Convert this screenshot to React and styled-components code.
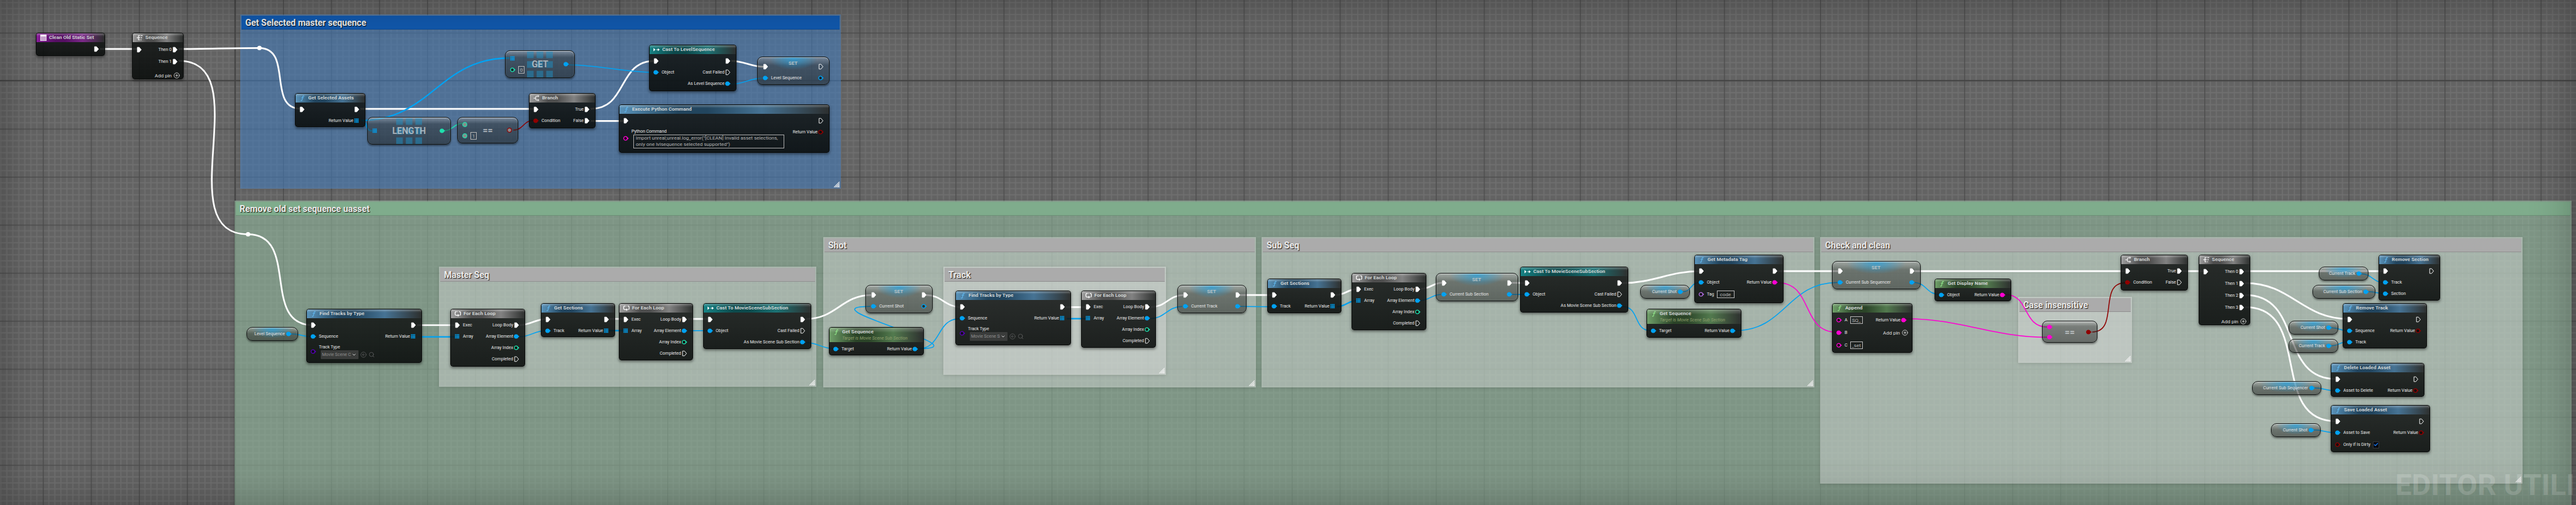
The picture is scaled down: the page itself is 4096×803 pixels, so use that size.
import React, { useId } from 'react';
import styled, { createGlobalStyle, css } from 'styled-components';
import { ChevronDown, CircleArrowLeft, Search, CirclePlus, Check } from 'lucide-react';

// graph units -> screen pixels
const ZOOM = 0.8843;
const px = (n) => `${Math.round(n * ZOOM)}px`;

const PinColor = {
  exec: '#ffffff',
  object: '#00a2f2',
  int: '#1fe0ae',
  bool: '#900000',
  string: '#ff00d2',
  class: '#5800b8',
  name: '#b06ee0',
};

const HeaderColor = {
  func: ['#5a93ba', '#22455e', '#467394'],
  pure: ['#6f9f69', '#2b4428', '#527a4e'],
  cast: ['#178385', '#0d4a4c', '#1c7274'],
  flow: ['#a0a0a0', '#4e4e4e', '#828282'],
  event: ['#8b1d9c', '#571064', '#7c2a8a'],
};

const comments = [
  { id: 'selected', title: 'Get Selected master sequence', x: 432, y: 26, w: 1080, h: 313, tone: 'blue' },
  { id: 'remove', title: 'Remove old set sequence uasset', x: 422, y: 361, w: 4202, h: 600, tone: 'green' },
  { id: 'master', title: 'Master Seq', x: 789, y: 480, w: 679, h: 216 },
  { id: 'shot', title: 'Shot', x: 1480, y: 426, w: 778, h: 270 },
  { id: 'track', title: 'Track', x: 1696, y: 480, w: 400, h: 194 },
  { id: 'sub', title: 'Sub Seq', x: 2268, y: 426, w: 994, h: 270 },
  { id: 'check', title: 'Check and clean', x: 3273, y: 426, w: 1263, h: 443 },
  { id: 'case', title: 'Case insensitive', x: 3629, y: 534, w: 205, h: 119 },
];

const exec = (label, on = true) => ({ type: 'exec', label, on });
const obj = (label, on = true) => ({ type: 'object', label, on });
const arr = (label) => ({ type: 'object', label, array: true });
const bool = (label, on = false) => ({ type: 'bool', label, on });

const loopPins = {
  left: [exec('Exec'), arr('Array')],
  right: [exec('Loop Body'), obj('Array Element'), { type: 'int', label: 'Array Index' }, exec('Completed', false)],
};
const sectionPins = { left: [exec(), obj('Track')], right: [exec(), arr('Return Value')] };
const subSectionPins = {
  left: [exec(), obj('Object')],
  right: [exec(), exec('Cast Failed', false), obj('As Movie Scene Sub Section')],
};
const sequencePins = { left: [obj('Target')], right: [obj('Return Value')] };
const targetNote = 'Target is Movie Scene Sub Section';

const nodes = [
  { title: 'Clean Old Static Set', kind: 'event', x: 65, y: 59, w: 124, h: 42, left: [], right: [exec()] },
  { title: 'Sequence', kind: 'flow', icon: 'sequence', x: 238, y: 59, w: 93, h: 84, row: 19, left: [exec()], right: [exec('Then 0'), exec('Then 1')], add: true, gap: true },
  { title: 'Get Selected Assets', kind: 'func', x: 530, y: 167, w: 127, h: 61, left: [exec()], right: [exec(), arr('Return Value')] },
  { title: 'Branch', kind: 'flow', icon: 'branch', x: 951, y: 167, w: 120, h: 63, left: [exec(), bool('Condition', true)], right: [exec('True'), exec('False')] },
  { title: 'Cast To LevelSequence', kind: 'cast', x: 1167, y: 80, w: 157, h: 84, left: [exec(), obj('Object')], right: [exec(), exec('Cast Failed', false), obj('As Level Sequence')] },
  {
    title: 'Execute Python Command', kind: 'func', x: 1113, y: 188, w: 379, h: 87,
    left: [exec(), { type: 'string', label: 'Python Command', area: 'import unreal;unreal.log_error("[CLEAN] Invalid asset selections,\nonly one lvlsequence selected supported")' }],
    right: [exec('', false), bool('Return Value')],
  },
  {
    title: 'Find Tracks by Type', kind: 'func', x: 551, y: 555, w: 208, h: 97,
    left: [exec(), obj('Sequence'), { type: 'class', label: 'Track Type', select: 'Movie Scene Cin' }],
    right: [exec(), arr('Return Value')],
  },
  { title: 'For Each Loop', kind: 'flow', icon: 'loop', x: 810, y: 555, w: 135, h: 104, ...loopPins },
  { title: 'Get Sections', kind: 'func', x: 972, y: 545, w: 133, h: 61, ...sectionPins },
  { title: 'For Each Loop', kind: 'flow', icon: 'loop', x: 1113, y: 545, w: 134, h: 103, ...loopPins },
  { title: 'Cast To MovieSceneSubSection', kind: 'cast', x: 1264, y: 545, w: 195, h: 83, ...subSectionPins },
  { title: 'Get Sequence', note: targetNote, kind: 'pure', x: 1491, y: 588, w: 171, h: 51, ...sequencePins },
  {
    title: 'Find Tracks by Type', kind: 'func', x: 1718, y: 523, w: 208, h: 98,
    left: [exec(), obj('Sequence'), { type: 'class', label: 'Track Type', select: 'Movie Scene Sub' }],
    right: [exec(), arr('Return Value')],
  },
  { title: 'For Each Loop', kind: 'flow', icon: 'loop', x: 1944, y: 523, w: 135, h: 103, ...loopPins },
  { title: 'Get Sections', kind: 'func', x: 2279, y: 501, w: 133, h: 62, ...sectionPins },
  { title: 'For Each Loop', kind: 'flow', icon: 'loop', x: 2430, y: 491, w: 135, h: 103, ...loopPins },
  { title: 'Cast To MovieSceneSubSection', kind: 'cast', x: 2733, y: 480, w: 195, h: 83, ...subSectionPins },
  {
    title: 'Get Metadata Tag', kind: 'func', x: 3046, y: 458, w: 161, h: 87,
    left: [exec(), obj('Object'), { type: 'name', label: 'Tag', text: 'code', wide: 28 }],
    right: [exec(), { type: 'string', label: 'Return Value', on: true }],
  },
  { title: 'Get Sequence', note: targetNote, kind: 'pure', x: 2960, y: 555, w: 171, h: 52, ...sequencePins },
  {
    title: 'Append', kind: 'pure', x: 3294, y: 545, w: 145, h: 89, row: 20, add: true,
    left: [
      { type: 'string', label: 'A', text: 'SQ_', wide: 20 },
      { type: 'string', label: 'B', on: true },
      { type: 'string', label: 'C', text: '_set', wide: 20 },
    ],
    right: [{ type: 'string', label: 'Return Value', on: true }],
  },
  { title: 'Get Display Name', kind: 'pure', x: 3478, y: 501, w: 138, h: 41, left: [obj('Object')], right: [{ type: 'string', label: 'Return Value', on: true }] },
  { title: 'Branch', kind: 'flow', icon: 'branch', x: 3813, y: 458, w: 121, h: 64, left: [exec(), bool('Condition', true)], right: [exec('True'), exec('False', false)] },
  { title: 'Sequence', kind: 'flow', icon: 'sequence', x: 3953, y: 458, w: 93, h: 127, row: 19, left: [exec()], right: [exec('Then 0'), exec('Then 1'), exec('Then 2'), exec('Then 3')], add: true, gap: true },
  { title: 'Remove Section', kind: 'func', x: 4277, y: 458, w: 111, h: 82, left: [exec(), obj('Track'), obj('Section')], right: [exec('', false)] },
  { title: 'Remove Track', kind: 'func', x: 4212, y: 545, w: 152, h: 81, left: [exec(), obj('Sequence'), obj('Track')], right: [exec('', false), bool('Return Value')] },
  { title: 'Delete Loaded Asset', kind: 'func', x: 4191, y: 653, w: 169, h: 61, left: [exec(), obj('Asset to Delete')], right: [exec('', false), bool('Return Value')] },
  {
    title: 'Save Loaded Asset', kind: 'func', x: 4191, y: 728, w: 179, h: 85,
    left: [exec(), obj('Asset to Save'), { type: 'bool', label: 'Only if Is Dirty', check: true }],
    right: [exec('', false), bool('Return Value')],
  },
];

const setters = [
  { label: 'Level Sequence', x: 1361, y: 102, w: 130, end: true },
  { label: 'Current Shot', x: 1556, y: 512, w: 121, used: false },
  { label: 'Current Track', x: 2117, y: 512, w: 124, used: true },
  { label: 'Current Sub Section', x: 2582, y: 491, w: 148, used: true },
  { label: 'Current Sub Sequencer', x: 3294, y: 469, w: 160, used: true },
];

const variables = [
  { label: 'Level Sequence', x: 443, y: 588, w: 93 },
  { label: 'Current Shot', x: 2949, y: 512, w: 89 },
  { label: 'Current Track', x: 4169, y: 480, w: 89 },
  { label: 'Current Sub Section', x: 4158, y: 512, w: 113 },
  { label: 'Current Shot', x: 4115, y: 577, w: 89 },
  { label: 'Current Track', x: 4115, y: 609, w: 89 },
  { label: 'Current Sub Sequencer', x: 4050, y: 685, w: 124 },
  { label: 'Current Shot', x: 4083, y: 761, w: 89 },
];

const wires = {
  exec: [
    [180, 88, 249, 88], [321, 88, 466, 86.3], [466, 86.3, 541, 195.7], [321, 109.3, 446, 421.3],
    [446, 421.3, 562, 584.6], [648, 195.7, 961, 195.7], [1062, 195.7, 1177, 109.5], [1062, 217.5, 1123, 217.5],
    [1315, 109.5, 1373, 120], [750, 584.6, 820, 584.6], [934, 584.6, 983, 573.4], [1095, 573.4, 1123, 573.4],
    [1237, 573.4, 1275, 573.4], [1450, 573.4, 1567, 530.5], [1665, 530.5, 1728, 552.3], [1916, 552.3, 1954, 552.3],
    [2069, 552.3, 2129, 530.5], [2230, 530.5, 2290, 530.5], [2402, 530.5, 2441, 519.5], [2555, 519.5, 2593, 508.5],
    [2719, 508.5, 2743, 509], [2918, 509, 3057, 487.5], [3197, 487.5, 3306, 487.5], [3443, 487.5, 3823, 487.5],
    [3924, 487.5, 3964, 487.5], [4037, 487.5, 4288, 487.5], [4037, 509, 4223, 573.5], [4037, 530.5, 4201, 681.5],
    [4037, 552.3, 4201, 757.5],
  ],
  object: [
    [524, 600.5, 561, 605.6], [1023, 116.7, 1175, 130], [1314, 151.5, 1371, 140.5], [934, 605.6, 981, 594.5],
    [1237, 594.5, 1273, 594.5], [1450, 616, 1499, 627], [1651, 627, 1565, 551], [1651, 627, 1726, 573],
    [2068, 573, 2126, 551], [2229, 551, 2288, 551.5], [2553, 540.5, 2591, 529.5], [2718, 529.5, 2741, 529.5],
    [2917, 551, 2968, 594.5], [3026, 524.5, 3055, 508.3], [3120, 594.5, 3304, 508], [3441, 508, 3487, 529.5],
    [4246, 492.5, 4286, 508], [4258, 524.5, 4286, 527.5], [4192, 589.5, 4221, 594.5], [4192, 621.8, 4221, 614.5],
    [4161, 697.5, 4199, 702.5], [4159, 773, 4199, 778],
  ],
  array: [
    [649, 216.5, 916, 104.3], [649, 216.5, 669, 235.5], [750, 605.6, 820, 605.6], [1095, 594.5, 1122, 594.5],
    [1918, 573, 1954, 573], [2404, 551.5, 2440, 540.5],
  ],
  int: [[799, 235, 831, 222]],
  bool: [[923, 234, 959, 216.5], [3762, 597, 3821, 508.5]],
  string: [[3196, 508.3, 3303, 597.5], [3605, 529.5, 3681, 588], [3427, 573, 3681, 606.5]],
};

const wireWidth = { exec: 3, array: 2.6 };

const wirePath = ([x1, y1, x2, y2]) => {
  const dx = Math.abs(x2 - x1);
  const dy = Math.abs(y2 - y1);
  // wires that run backwards leave the pin with a stronger tangent
  const t = x2 < x1 ? dx + dy / 2 : (dx + dy) / 3;
  return `M${x1} ${y1}C${x1 + t} ${y1} ${x2 - t} ${y2} ${x2} ${y2}`;
};

const GridLines = () => {
  const major = 86.37;
  const steps = [1, 2, 3, 4, 5, 6, 7];
  return (
    <Layer aria-hidden="true">
      <defs>
        <pattern
          id="grid"
          width={major}
          height={major}
          patternUnits="userSpaceOnUse"
          patternTransform={`scale(${ZOOM}) translate(422.5 145)`}
        >
          <rect width={major} height={major} fill="#636363" />
          {steps.map((n) => (
            <path
              key={n}
              d={`M${(n * major) / 8} 0V${major}M0 ${(n * major) / 8}H${major}`}
              stroke="#6f6f6f"
              strokeWidth="2"
            />
          ))}
          <path d={`M0 0V${major}M0 0H${major}`} stroke="#4b4b4b" strokeWidth="3" />
        </pattern>
      </defs>
      <rect width="100%" height="100%" fill="url(#grid)" />
      <path
        d="M422.5 0V2000M0 145H8000"
        transform={`scale(${ZOOM})`}
        stroke="#434343"
        strokeWidth="2"
      />
    </Layer>
  );
};

const Wires = () => (
  <Layer aria-hidden="true">
    <g transform={`scale(${ZOOM})`} fill="none">
      {Object.keys(wires).map((type) =>
        wires[type].map((w) => (
          <path
            key={w.join()}
            d={wirePath(w)}
            stroke={PinColor[type] || PinColor.object}
            strokeWidth={wireWidth[type] || 1.7}
          />
        )),
      )}
      <circle cx="466.5" cy="86.3" r="4" fill="#fff" />
      <circle cx="446" cy="421.3" r="4" fill="#fff" />
    </g>
  </Layer>
);

const Pin = ({ type, on, array, ring }) => {
  const color = PinColor[type];
  if (type === 'exec') {
    return (
      <PinSvg viewBox="0 0 10 10">
        <path
          d="M2.3 1.2H5.4L8.6 5L5.4 8.8H2.3Z"
          fill={on ? color : 'none'}
          stroke={color}
          strokeWidth="0.9"
          strokeLinejoin="round"
        />
      </PinSvg>
    );
  }
  if (array) {
    return (
      <PinSvg viewBox="0 0 10 10">
        {[0, 1, 2].map((r) =>
          [0, 1, 2].map((c) => (
            <rect key={`${r}${c}`} x={1.5 + c * 2.4} y={1.5 + r * 2.4} width="1.9" height="1.9" fill={color} />
          )),
        )}
      </PinSvg>
    );
  }
  if (ring) {
    return (
      <PinSvg viewBox="0 0 10 10">
        <circle cx="5" cy="5" r="3.3" fill="#8a8a8a" stroke={color} strokeWidth="1.2" />
      </PinSvg>
    );
  }
  return (
    <PinSvg viewBox="0 0 10 10">
      <path d="M7.6 3.2L9.8 5L7.6 6.8Z" fill={color} />
      <circle cx="4.6" cy="5" r="2.9" fill={on ? color : 'rgba(0,0,0,.55)'} stroke={color} strokeWidth="1.3" />
    </PinSvg>
  );
};

const NodeIcon = ({ name }) => {
  if (name === 'func' || name === 'pure') {
    return (
      <IconSvg viewBox="0 0 12 12" fill="none" stroke={name === 'func' ? '#63b8ee' : '#93e88c'} strokeLinecap="round">
        <path d="M9 2.2C7.6 1 6.7 2 6.4 3.6L5.3 9C5 10.8 4 11.3 2.9 10.4" strokeWidth="1.3" />
        <path d="M4.2 5.2H8" strokeWidth="1" />
      </IconSvg>
    );
  }
  if (name === 'cast') {
    return (
      <IconSvg viewBox="0 0 12 12" fill="#fff">
        <path d="M0 3.2H1.2V8.8H0ZM1.2 4L4 6L1.2 8ZM5.6 5.3H8.4V3.2L12 6L8.4 8.8V6.7H5.6Z" />
      </IconSvg>
    );
  }
  if (name === 'loop') {
    return (
      <IconSvg viewBox="0 0 12 12" fill="none" stroke="#fff" strokeWidth="1.5">
        <path d="M4 1.8H2.6Q0.8 1.8 0.8 3.6V7Q0.8 8.8 2.6 8.8H6" />
        <path d="M8.2 1.8H9.4Q11.2 1.8 11.2 3.6V7Q11.2 8.8 9.4 8.8" />
        <path d="M5.2 1.8H7" strokeDasharray="1 1" />
        <path d="M5.8 6.2L9 8.8L5.8 11.6Z" fill="#fff" stroke="none" />
      </IconSvg>
    );
  }
  if (name === 'branch') {
    return (
      <IconSvg viewBox="0 0 12 12" fill="none" stroke="#eee" strokeWidth="1.5">
        <path d="M0.5 6H4.5M9 2.2H6.4Q4.6 2.2 4.6 4V8Q4.6 9.8 6.4 9.8H9" />
        <path d="M8.6 0L11.6 2.2L8.6 4.4ZM8.6 7.6L11.6 9.8L8.6 12Z" fill="#eee" stroke="none" />
      </IconSvg>
    );
  }
  if (name === 'sequence') {
    return (
      <IconSvg viewBox="0 0 12 12" fill="none" stroke="#eee" strokeWidth="1.6">
        <path d="M0.5 6H7M6.6 2H3.8V10H6.6" />
        <path d="M8 2H11.8M8.4 6H10.6M8 10H9.6" />
      </IconSvg>
    );
  }
  return (
    <IconSvg viewBox="0 0 12 12">
      <rect x="0.5" y="0.5" width="11" height="11" fill="#c9a3d0" stroke="#f3e8f5" />
      <rect x="0.5" y="0.5" width="11" height="3" fill="#fff" />
    </IconSvg>
  );
};

const Field = ({ pin }) => {
  const id = useId();
  if (pin.area) {
    return (
      <FieldStack>
        <Label htmlFor={id}>{pin.label}</Label>
        <CodeBox id={id} rows="2" defaultValue={pin.area} spellCheck="false" />
      </FieldStack>
    );
  }
  if (pin.select) {
    return (
      <FieldStack>
        <Label htmlFor={id}>{pin.label}</Label>
        <PickerRow>
          <SelectWrapper>
            <ClassSelect id={id}>
              <option>{pin.select}</option>
            </ClassSelect>
            <ChevronDown size={8} strokeWidth={3} />
          </SelectWrapper>
          <ToolButton aria-label="Use selected">
            <CircleArrowLeft size={10} />
          </ToolButton>
          <ToolButton aria-label="Browse">
            <Search size={10} />
          </ToolButton>
        </PickerRow>
      </FieldStack>
    );
  }
  if (pin.check) {
    return (
      <>
        <Label htmlFor={id}>{pin.label}</Label>
        <CheckWrapper>
          <CheckBox id={id} type="checkbox" defaultChecked />
          <Check size={8} strokeWidth={4} />
        </CheckWrapper>
      </>
    );
  }
  return (
    <>
      <Label htmlFor={id}>{pin.label}</Label>
      <TextBox id={id} $wide={pin.wide} defaultValue={pin.text} />
    </>
  );
};

const PinRow = ({ pin, right, row }) => {
  const hasField = pin.area || pin.select || pin.check || pin.text;
  return (
    <Row $right={right} $height={row} $tall={pin.area || pin.select} $field={hasField}>
      <Pin {...pin} />
      {hasField ? <Field pin={pin} /> : pin.label && <PinText>{pin.label}</PinText>}
    </Row>
  );
};

const GraphNode = ({ node }) => (
  <NodeBox $x={node.x} $y={node.y} $w={node.w} $h={node.h}>
    <NodeHeader $kind={node.kind} $tall={node.note}>
      <NodeIcon name={node.icon || node.kind} />
      <div>
        <NodeTitle>{node.title}</NodeTitle>
        {node.note && <NodeNote>{node.note}</NodeNote>}
      </div>
    </NodeHeader>
    <NodeBody>
      <PinColumn>
        {node.left.map((pin, i) => (
          <PinRow key={i} pin={pin} row={node.row} />
        ))}
      </PinColumn>
      <PinColumn>
        {node.right.map((pin, i) => (
          <PinRow key={i} pin={pin} row={node.row} right />
        ))}
        {node.add && (
          <AddPin $gap={node.gap}>
            Add pin
            <CirclePlus size={10} />
          </AddPin>
        )}
      </PinColumn>
    </NodeBody>
  </NodeBox>
);

const SetNode = ({ node }) => (
  <SetBox $x={node.x} $y={node.y} $w={node.w} $h={51}>
    <SetTop>
      <Row>
        <Pin type="exec" on />
      </Row>
      <SetTitle>SET</SetTitle>
      <Row $right>
        <Pin type="exec" on={!node.end} />
      </Row>
    </SetTop>
    <SetBottom>
      <Row>
        <Pin type="object" on />
        <PinText>{node.label}</PinText>
      </Row>
      <Row $right>
        <Pin type="object" on={node.used} />
      </Row>
    </SetBottom>
  </SetBox>
);

const ArrayMark = () => (
  <MarkSvg viewBox="0 0 47 47" fill="#1f8fc4" fillOpacity="0.5">
    {[0, 17.5, 35].map((x) => [0, 17.5, 35].map((y) => <rect key={`${x}-${y}`} x={x} y={y} width="12" height="12" />))}
  </MarkSvg>
);

const App = () => (
  <Canvas>
    <GlobalStyle />
    <GridLines />
    {comments.map((c) => (
      <CommentBox key={c.id} $x={c.x} $y={c.y} $w={c.w} $h={c.h} $tone={c.tone}>
        <CommentTitle $tone={c.tone}>{c.title}</CommentTitle>
        <GripSvg viewBox="0 0 9 9" stroke="#f4f4f4" strokeWidth="1.1">
          <path d="M0 9L9 0M2.6 9L9 2.6M5.2 9L9 5.2M7.4 9L9 7.4" />
        </GripSvg>
      </CommentBox>
    ))}
    <Wires />

    {nodes.map((n) => (
      <GraphNode key={`${n.x}-${n.y}`} node={n} />
    ))}
    {setters.map((n) => (
      <SetNode key={n.x} node={n} />
    ))}
    {variables.map((v) => (
      <VariableBox key={`${v.x}-${v.y}`} $x={v.x} $y={v.y} $w={v.w} $h={25}>
        <PinText>{v.label}</PinText>
        <Pin type="object" on />
      </VariableBox>
    ))}

    <CompactBox $x={660} $y={210} $w={150} $h={50}>
      <Operator>
        <ArrayMark />
        <OperatorText>LENGTH</OperatorText>
      </Operator>
      <Row>
        <Pin type="object" array />
      </Row>
      <Row $right>
        <Pin type="int" on />
      </Row>
    </CompactBox>
    <CompactBox $x={908} $y={91} $w={125} $h={50}>
      <Operator>
        <ArrayMark />
        <OperatorText>GET</OperatorText>
      </Operator>
      <div>
        <Row>
          <Pin type="object" array />
        </Row>
        <Row>
          <Pin type="int" />
          <TextBox aria-label="Index" $wide={10} defaultValue="0" />
        </Row>
      </div>
      <Row $right>
        <Pin type="object" on />
      </Row>
    </CompactBox>
    <CompactBox $x={822} $y={210} $w={110} $h={48}>
      <Operator>
        <OperatorText>==</OperatorText>
      </Operator>
      <div>
        <Row>
          <Pin type="int" ring />
        </Row>
        <Row>
          <Pin type="int" ring />
          <TextBox aria-label="Compare value" $wide={10} defaultValue="1" />
        </Row>
      </div>
      <Row $right>
        <Pin type="bool" ring />
      </Row>
    </CompactBox>
    <CompactBox $x={3672} $y={577} $w={100} $h={40}>
      <Operator>
        <OperatorText>==</OperatorText>
      </Operator>
      <div>
        <Row $height={16}>
          <Pin type="string" on />
        </Row>
        <Row $height={16}>
          <Pin type="string" on />
        </Row>
      </div>
      <Row $right>
        <Pin type="bool" on />
      </Row>
    </CompactBox>

    <Watermark>EDITOR UTILI</Watermark>
    <Vignette />
  </Canvas>
);

const GlobalStyle = createGlobalStyle`
  * {
    box-sizing: border-box;
  }
  body {
    margin: 0;
    background: #636363;
    font-family: Roboto, sans-serif;
  }
  button, input, textarea, select {
    font-family: inherit;
    margin: 0;
  }
`;

const Canvas = styled.main`
  position: relative;
  width: 100%;
  height: 100vh;
  overflow: hidden;
`;

const Layer = styled.svg`
  position: absolute;
  left: 0;
  top: 0;
  width: 100%;
  height: 100%;
`;

const placed = css`
  position: absolute;
  left: ${({ $x }) => px($x)};
  top: ${({ $y }) => px($y)};
  width: ${({ $w }) => px($w)};
  height: ${({ $h }) => px($h)};
`;

const commentFill = { blue: 'rgba(67, 121, 184, 0.6)', green: 'rgba(145, 183, 157, 0.6)' };
const commentBar = { blue: '#1158ac', green: '#7fac8c' };

const CommentBox = styled.section`
  ${placed}
  padding: 2px;
  background: ${({ $tone }) => commentFill[$tone] || 'rgba(226, 226, 226, 0.4)'};
  box-shadow: 0 1px 5px rgba(0, 0, 0, 0.15), inset 0 0 10px rgba(255, 255, 255, 0.06);
`;

const CommentTitle = styled.h2`
  margin: 0;
  padding: 0 6px;
  height: 22px;
  line-height: 22px;
  font-size: 14px;
  font-weight: 700;
  white-space: nowrap;
  color: #ececec;
  text-shadow: 1px 1px 1px rgba(0, 0, 0, 0.85);
  background: ${({ $tone }) => commentBar[$tone] || '#ababab'};
  border-bottom: 1px solid rgba(0, 0, 0, 0.15);
`;

const GripSvg = styled.svg`
  position: absolute;
  right: 2px;
  bottom: 2px;
  width: 9px;
  height: 9px;
`;

const NodeBox = styled.article`
  ${placed}
  border: 1px solid #0a0c0b;
  border-radius: 4px;
  overflow: hidden;
  background: linear-gradient(rgba(22, 25, 24, 0.87), rgba(9, 12, 11, 0.89));
  box-shadow: 0 2px 4px rgba(0, 0, 0, 0.5);
`;

const NodeHeader = styled.header`
  display: flex;
  gap: 4px;
  height: ${({ $tall }) => ($tall ? '23px' : '14px')};
  padding: 2px 6px;
  background:
    linear-gradient(rgba(255, 255, 255, 0.28), rgba(255, 255, 255, 0) 35%),
    linear-gradient(
      90deg,
      ${({ $kind }) => HeaderColor[$kind][0]} 0%,
      ${({ $kind }) => HeaderColor[$kind][1]} 28%,
      ${({ $kind }) => HeaderColor[$kind][1]} 42%,
      ${({ $kind }) => HeaderColor[$kind][2]} 68%,
      rgba(48, 50, 49, 0.8) 100%
    );
`;

const NodeTitle = styled.h3`
  margin: 0;
  font-size: 8px;
  line-height: 10px;
  font-weight: 700;
  white-space: nowrap;
  color: #d2d6d6;
`;

const NodeNote = styled.p`
  margin: 0;
  font-size: 7px;
  line-height: 10px;
  font-style: italic;
  white-space: nowrap;
  color: #8f9f6c;
`;

const IconSvg = styled.svg`
  width: 10px;
  height: 10px;
  flex: none;
`;

const NodeBody = styled.div`
  display: flex;
  justify-content: space-between;
  padding: 2px 8px 0 5px;
`;

const PinColumn = styled.div`
  display: flex;
  flex-direction: column;
`;

const PinSvg = styled.svg`
  width: 10px;
  height: 10px;
  flex: none;
`;

const Row = styled.div`
  display: flex;
  align-items: center;
  flex-direction: ${({ $right }) => ($right ? 'row-reverse' : 'row')};
  gap: ${({ $right }) => ($right ? '0' : '4px')};
  height: ${({ $height, $tall, $field }) => ($tall ? 'auto' : `${$height || ($field ? 20 : 18)}px`)};
  ${({ $tall }) => $tall && 'padding-top: 3px;'}
`;

const PinText = styled.span`
  font-size: 7px;
  line-height: 10px;
  white-space: nowrap;
  color: #e6e6e6;
`;

const Label = styled.label`
  font-size: 7px;
  line-height: 10px;
  white-space: nowrap;
  color: #e6e6e6;
`;

const FieldStack = styled.div`
  display: flex;
  flex-direction: column;
`;

const TextBox = styled.input`
  width: ${({ $wide }) => $wide}px;
  height: 12px;
  padding: 0 1px;
  border: 1px solid #b4b4b4;
  background: transparent;
  color: #b8b8b8;
  font-size: 8px;
  line-height: 10px;
  text-align: center;
`;

const CodeBox = styled.textarea`
  width: 240px;
  height: 22px;
  margin-left: 3px;
  padding: 0 3px;
  border: 1px solid #a8a8a8;
  background: transparent;
  color: #b4b4b4;
  font-size: 8px;
  line-height: 10px;
  white-space: pre;
  overflow: hidden;
  resize: none;
`;

const PickerRow = styled.div`
  display: flex;
  align-items: center;
  gap: 3px;
  margin-left: 3px;
`;

const SelectWrapper = styled.div`
  display: grid;
  align-items: center;
  width: 60px;
  height: 14px;
  border-radius: 1px;
  background: #3a3c3b;
  color: #c8c8c8;
  > * {
    grid-area: 1 / 1;
  }
  > svg {
    justify-self: end;
    margin-right: 3px;
    pointer-events: none;
  }
`;

const ClassSelect = styled.select`
  appearance: none;
  width: 48px;
  padding: 0 0 0 2px;
  border: 0;
  background: transparent;
  color: #8f8f8f;
  font-size: 7px;
  line-height: 12px;
`;

const ToolButton = styled.button`
  display: flex;
  padding: 0;
  border: 0;
  background: none;
  color: #5a5c5b;
`;

const CheckWrapper = styled.span`
  display: grid;
  place-items: center;
  color: #1673e6;
  > * {
    grid-area: 1 / 1;
  }
  > svg {
    pointer-events: none;
  }
`;

const CheckBox = styled.input`
  appearance: none;
  width: 10px;
  height: 11px;
  border: 1px solid #34363a;
  background: #07080d;
`;

const AddPin = styled.button`
  display: flex;
  align-items: center;
  align-self: flex-end;
  gap: 3px;
  height: 20px;
  padding: 0;
  margin: ${({ $gap }) => ($gap ? '3px -3px 0 0' : '0 -2px 0 0')};
  border: 0;
  background: none;
  color: #dedede;
  font-size: 8px;
  white-space: nowrap;
`;

const glass = css`
  ${placed}
  border: 1px solid #161918;
  border-radius: 8px;
  box-shadow: 0 2px 3px rgba(0, 0, 0, 0.45), inset 0 1px 1px rgba(255, 255, 255, 0.45);
`;

const SetBox = styled.article`
  ${glass}
  padding: 0 8px 0 7px;
  background:
    radial-gradient(ellipse 34% 40% at 50% 6%, rgba(38, 160, 220, 0.75), rgba(38, 160, 220, 0)),
    linear-gradient(rgba(160, 160, 160, 0.5), rgba(50, 52, 50, 0.5) 30%, rgba(36, 38, 36, 0.55));
`;

const SetTop = styled.div`
  display: flex;
  align-items: flex-end;
  justify-content: space-between;
  height: 24px;
`;

const SetTitle = styled.h3`
  align-self: flex-start;
  margin: 0;
  font-size: 8px;
  line-height: 20px;
  font-weight: 500;
  color: #c6caca;
`;

const SetBottom = styled.div`
  display: flex;
  justify-content: space-between;
`;

const VariableBox = styled.article`
  ${glass}
  display: flex;
  align-items: center;
  justify-content: flex-end;
  gap: 1px;
  padding-right: 9px;
  border-radius: 9px;
  background:
    radial-gradient(ellipse 40% 70% at 50% 15%, rgba(38, 160, 220, 0.75), rgba(38, 160, 220, 0)),
    linear-gradient(rgba(170, 170, 170, 0.5), rgba(50, 52, 50, 0.5) 45%, rgba(36, 38, 36, 0.55));
`;

const CompactBox = styled.article`
  ${glass}
  display: flex;
  align-items: center;
  justify-content: space-between;
  padding: 0 8px 0 6px;
  background: linear-gradient(rgba(170, 170, 170, 0.5), rgba(50, 52, 50, 0.5) 24%, rgba(30, 32, 30, 0.55));
`;

const Operator = styled.div`
  position: absolute;
  inset: 0;
  display: grid;
  place-items: center;
  > * {
    grid-area: 1 / 1;
  }
`;

const MarkSvg = styled.svg`
  width: 41px;
  height: 41px;
`;

const OperatorText = styled.span`
  font-size: 14px;
  line-height: 16px;
  font-weight: 700;
  color: rgba(205, 210, 214, 0.75);
`;

const Watermark = styled.div`
  position: absolute;
  right: 2px;
  bottom: 4px;
  font-size: 47px;
  line-height: 56px;
  font-weight: 700;
  white-space: nowrap;
  color: rgba(255, 255, 255, 0.2);
`;

const Vignette = styled.div`
  position: absolute;
  inset: 0;
  pointer-events: none;
  box-shadow: inset 0 0 70px rgba(0, 0, 0, 0.3);
`;

export default App;
